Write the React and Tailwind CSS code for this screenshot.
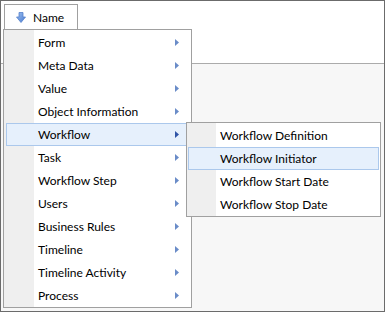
import React from "react";

const mainItems = [
  "Form",
  "Meta Data",
  "Value",
  "Object Information",
  "Workflow",
  "Task",
  "Workflow Step",
  "Users",
  "Business Rules",
  "Timeline",
  "Timeline Activity",
  "Process",
];

const subItems = [
  "Workflow Definition",
  "Workflow Initiator",
  "Workflow Start Date",
  "Workflow Stop Date",
];

function Arrow({ active }) {
  return (
    <svg width="4" height="7" viewBox="0 0 4 7" className="shrink-0">
      <path d="M0 0 L4 3.5 L0 7 Z" fill={active ? "#2f54a6" : "#6a8cc8"} />
    </svg>
  );
}

function DownIcon() {
  return (
    <svg width="10" height="11" viewBox="0 0 10 11">
      <defs>
        <linearGradient id="dg" x1="0" y1="0" x2="1" y2="1">
          <stop offset="0" stopColor="#9cc0f0" />
          <stop offset="1" stopColor="#4a7bd0" />
        </linearGradient>
      </defs>
      <path
        d="M3 0.5 H7 V5 H9.5 L5 10.5 L0.5 5 H3 Z"
        fill="url(#dg)"
        stroke="#5582cc"
        strokeWidth="0.8"
        strokeLinejoin="round"
      />
    </svg>
  );
}

function MenuItem({ label, active, submenu }) {
  return (
    <div
      className={`h-[23px] flex items-center pl-[31px] pr-[9px] border ${
        active ? "bg-[#e6f0fc] border-[#abc8ec]" : "border-transparent"
      }`}
    >
      <span className="flex-1 whitespace-nowrap pt-[1px]">{label}</span>
      {submenu && <Arrow active={active} />}
    </div>
  );
}

export default function App() {
  return (
    <div
      className="relative w-[385px] h-[312px] border border-[#6b6b6b] flex flex-col text-[12px] text-black"
      style={{ fontFamily: '"Segoe UI", Lato, "Noto Sans", sans-serif' }}
    >
      <div className="h-[63px] bg-white border-b border-[#ababab]">
        <div className="ml-[3px] mt-[3px] w-[74px] h-[26px] border border-b-0 border-[#a0a0a0] flex items-center pl-[11px] gap-[7px]">
          <DownIcon />
          <span className="pt-[1px]">Name</span>
        </div>
      </div>
      <div className="flex-1 bg-[#f7f7f7]" />

      <div className="absolute left-[2px] top-[28px] w-[189px] border border-[#a0a0a0] pt-[1px] px-[2px] bg-[linear-gradient(to_right,#efefef_30px,#ffffff_30px)]">
        {mainItems.map((m) => (
          <MenuItem key={m} label={m} active={m === "Workflow"} submenu />
        ))}
      </div>

      <div className="absolute left-[185px] top-[121px] w-[195px] border border-[#a0a0a0] pt-[1px] px-[1px] bg-[linear-gradient(to_right,#efefef_29px,#ffffff_29px)]">
        {subItems.map((s) => (
          <MenuItem key={s} label={s} active={s === "Workflow Initiator"} />
        ))}
      </div>
    </div>
  );
}
